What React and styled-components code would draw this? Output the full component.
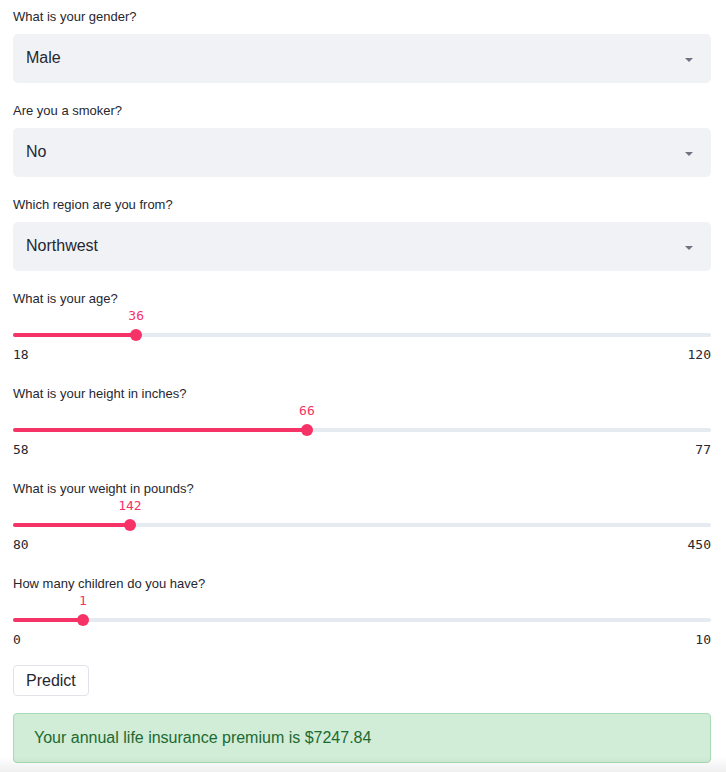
import React from "react";
import styled, { createGlobalStyle } from "styled-components";

const selects = [
  { label: "What is your gender?", value: "Male" },
  { label: "Are you a smoker?", value: "No" },
  { label: "Which region are you from?", value: "Northwest" },
];

const sliders = [
  { label: "What is your age?", min: 18, max: 120, value: 36 },
  { label: "What is your height in inches?", min: 58, max: 77, value: 66 },
  { label: "What is your weight in pounds?", min: 80, max: 450, value: 142 },
  { label: "How many children do you have?", min: 0, max: 10, value: 1 },
];

const SelectBox = ({ label, value }) => (
  <Block>
    <Label>{label}</Label>
    <Select>
      <SelectValue>{value}</SelectValue>
      <Caret />
    </Select>
  </Block>
);

const Slider = ({ label, min, max, value }) => {
  const pct = ((value - min) / (max - min)) * 100;
  return (
    <SliderBlock>
      <Label>{label}</Label>
      <SliderArea>
        <ThumbValue style={{ left: `${pct}%` }}>{value}</ThumbValue>
        <Track>
          <Rail />
          <Fill style={{ width: `${pct}%` }} />
          <Thumb style={{ left: `${pct}%` }} />
        </Track>
      </SliderArea>
      <Bounds>
        <span>{min}</span>
        <span>{max}</span>
      </Bounds>
    </SliderBlock>
  );
};

const App = () => (
  <Page>
    <GlobalStyle />
    {selects.map((s) => (
      <SelectBox key={s.label} {...s} />
    ))}
    {sliders.map((s) => (
      <Slider key={s.label} {...s} />
    ))}
    <Button type="button">Predict</Button>
    <Success>Your annual life insurance premium is $7247.84</Success>
    <BottomShade />
  </Page>
);

const GlobalStyle = createGlobalStyle`
  body {
    margin: 0;
    background: #fff;
    font-family: "Liberation Sans", Arial, sans-serif;
    color: #262730;
  }
`;

const Page = styled.div`
  display: flex;
  flex-direction: column;
  align-items: flex-start;
  width: 698px;
  padding: 7px 15px 0 13px;
`;

const Block = styled.div`
  display: flex;
  flex-direction: column;
  width: 100%;
  margin-bottom: 18px;
`;

const Label = styled.div`
  font-size: 13px;
  line-height: 20px;
  color: #262730;
`;

const Select = styled.div`
  display: flex;
  align-items: center;
  justify-content: space-between;
  height: 49px;
  margin-top: 7px;
  padding: 0 18px 2px 13px;
  background: #f0f2f6;
  border-radius: 5px;
  box-sizing: border-box;
`;

const SelectValue = styled.span`
  font-size: 16px;
  color: #262730;
`;

const Caret = styled.span`
  width: 0;
  height: 0;
  border-left: 4px solid transparent;
  border-right: 4px solid transparent;
  border-top: 4px solid #6f7280;
  margin-top: 4px;
`;

const SliderBlock = styled.div`
  display: flex;
  flex-direction: column;
  width: 100%;
  margin-bottom: 22px;
`;

const SliderArea = styled.div`
  position: relative;
  padding-top: 20px;
`;

const ThumbValue = styled.span`
  position: absolute;
  top: 0;
  transform: translateX(-50%);
  font-family: "DejaVu Sans Mono", "Liberation Mono", monospace;
  font-size: 13px;
  line-height: 14px;
  color: #f63366;
`;

const Track = styled.div`
  position: relative;
  height: 12px;
`;

const Rail = styled.div`
  position: absolute;
  left: 0;
  right: 0;
  top: 4px;
  height: 4px;
  border-radius: 2px;
  background: #e6eaf1;
`;

const Fill = styled.div`
  position: absolute;
  left: 0;
  top: 4px;
  height: 4px;
  border-radius: 2px;
  background: #f63366;
`;

const Thumb = styled.div`
  position: absolute;
  top: 0;
  width: 12px;
  height: 12px;
  margin-left: -6px;
  border-radius: 50%;
  background: #f63366;
`;

const Bounds = styled.div`
  display: flex;
  justify-content: space-between;
  margin-top: 7px;
  font-family: "DejaVu Sans Mono", "Liberation Mono", monospace;
  font-size: 13px;
  line-height: 14px;
  color: #262730;
`;

const Button = styled.button`
  margin-top: -4px;
  height: 31px;
  padding: 0 12px;
  background: #fff;
  border: 1px solid #e1e3e8;
  border-radius: 4px;
  font-family: "Liberation Sans", Arial, sans-serif;
  font-size: 16px;
  color: #262730;
`;

const Success = styled.div`
  box-sizing: border-box;
  width: 100%;
  height: 50px;
  margin-top: 17px;
  padding: 0 20px;
  display: flex;
  align-items: center;
  background: #d1ecd7;
  border: 1px solid #a7dab5;
  border-radius: 4px;
  font-size: 16px;
  color: #1c6a31;
`;

const BottomShade = styled.div`
  position: fixed;
  left: 0;
  right: 0;
  bottom: 0;
  height: 16px;
  background: linear-gradient(rgba(0, 0, 0, 0), rgba(0, 0, 0, 0.06));
  pointer-events: none;
`;

export default App;
